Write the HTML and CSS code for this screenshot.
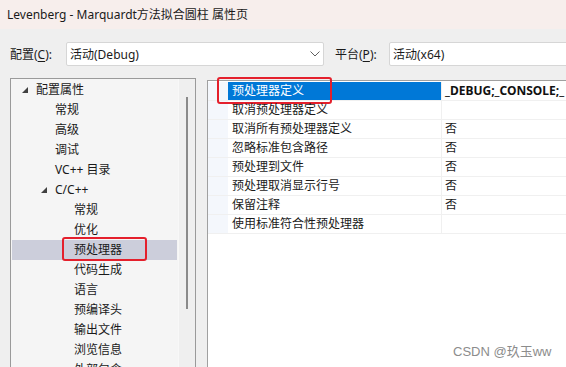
FILE: index.html
```html
<!DOCTYPE html>
<html lang="zh-CN">
<head>
    <meta charset="UTF-8">
    <title>属性页</title>
    <link rel="stylesheet" href="styles.css">
</head>
<body>
    <div class="titlebar">Levenberg - Marquardt方法拟合圆柱 属性页</div>

    <div class="config-row">
        <div class="label">配置(<u>C</u>):</div>
        <div class="combo combo-config">
            <span>活动(Debug)</span>
            <svg class="chevron" width="10" height="6" viewBox="0 0 10 6"><polyline points="0.5,0.5 5,5 9.5,0.5" fill="none" stroke="#606060" stroke-width="1"/></svg>
        </div>
        <div class="label label-platform">平台(<u>P</u>):</div>
        <div class="combo combo-platform">
            <span>活动(x64)</span>
        </div>
    </div>

    <div class="main">
        <div class="tree">
            <div class="tree-list">
                <div class="node lvl0"><svg class="twisty" width="6" height="6" viewBox="0 0 6 6"><polygon points="6,0 6,6 0,6" fill="#404040"/></svg>配置属性</div>
                <div class="node lvl1">常规</div>
                <div class="node lvl1">高级</div>
                <div class="node lvl1">调试</div>
                <div class="node lvl1">VC++ 目录</div>
                <div class="node lvl1"><svg class="twisty" width="6" height="6" viewBox="0 0 6 6"><polygon points="6,0 6,6 0,6" fill="#404040"/></svg>C/C++</div>
                <div class="node lvl2">常规</div>
                <div class="node lvl2">优化</div>
                <div class="node lvl2 selected marked">预处理器</div>
                <div class="node lvl2">代码生成</div>
                <div class="node lvl2">语言</div>
                <div class="node lvl2">预编译头</div>
                <div class="node lvl2">输出文件</div>
                <div class="node lvl2">浏览信息</div>
                <div class="node lvl2">外部包含</div>
            </div>
            <div class="scrollbar"><div class="thumb"></div></div>
        </div>

        <div class="grid">
            <div class="row selected">
                <div class="gutter"></div>
                <div class="name marked">预处理器定义</div>
                <div class="value bold">_DEBUG;_CONSOLE;_</div>
            </div>
            <div class="row"><div class="gutter"></div><div class="name">取消预处理器定义</div><div class="value"></div></div>
            <div class="row"><div class="gutter"></div><div class="name">取消所有预处理器定义</div><div class="value">否</div></div>
            <div class="row"><div class="gutter"></div><div class="name">忽略标准包含路径</div><div class="value">否</div></div>
            <div class="row"><div class="gutter"></div><div class="name">预处理到文件</div><div class="value">否</div></div>
            <div class="row"><div class="gutter"></div><div class="name">预处理取消显示行号</div><div class="value">否</div></div>
            <div class="row"><div class="gutter"></div><div class="name">保留注释</div><div class="value">否</div></div>
            <div class="row"><div class="gutter"></div><div class="name">使用标准符合性预处理器</div><div class="value"></div></div>
        </div>
    </div>

    <div class="watermark">CSDN @玖玉ww</div>
</body>
</html>
```

FILE: styles.css
```css
/* General Styles */
html, body {
    height: 367px;
}
body {
    margin: 0;
    position: relative;
    overflow: hidden;
    background-color: #EFEFEF;
    color: #1A1A1A;
    font-family: "Noto Sans", "Noto Sans CJK SC", sans-serif;
    font-size: 12px;
}
.titlebar {
    height: 29px;
    line-height: 30px;
    padding-left: 7px;
    background-color: #F7EEEC;
    color: #1A1A1A;
}

/* Configuration row */
.config-row {
    display: flex;
    align-items: center;
    height: 24px;
    margin-top: 13px;
    padding-left: 10px;
}
.label {
    width: 56px;
    flex-shrink: 0;
    white-space: nowrap;
}
.label u {
    text-decoration-thickness: 1px;
    text-underline-offset: 2px;
}
.label-platform {
    width: 54px;
    margin-left: 11px;
}
.combo {
    box-sizing: border-box;
    height: 24px;
    flex-shrink: 0;
    display: flex;
    align-items: center;
    justify-content: space-between;
    padding: 0 3px 0 3px;
    background-color: #FFFFFF;
    border: 1px solid #D6D6D6;
    border-radius: 2px;
}
.combo-config {
    width: 258px;
}
.combo-platform {
    width: 200px;
}

/* Main area */
.main {
    display: flex;
    align-items: flex-start;
    margin-top: 12px;
}
.tree {
    display: flex;
    flex-shrink: 0;
    width: 186px;
    height: 320px;
    margin-left: 10px;
    box-sizing: border-box;
    border: 1px solid #9A9A9A;
    background-color: #F5F5F5;
}
.tree-list {
    flex: 1;
    padding-top: 1px;
}
.node {
    position: relative;
    height: 20px;
    line-height: 20px;
    margin: 0 1px;
    white-space: nowrap;
}
.node.lvl0 { padding-left: 24px; }
.node.lvl1 { padding-left: 43px; }
.node.lvl2 { padding-left: 62px; }
.twisty {
    position: absolute;
    margin-left: -14px;
    margin-top: 7px;
}
.node.selected {
    background-color: #CCCEDB;
}
.node.marked::after {
    content: "";
    position: absolute;
    left: 50px;
    top: -3px;
    width: 85px;
    height: 24px;
    box-sizing: border-box;
    border: 2px solid #E4202C;
    border-radius: 3px;
}
.scrollbar {
    width: 16px;
    background-color: #EFEFEF;
    border-left: 1px solid #F8F8F8;
}
.thumb {
    width: 2px;
    height: 212px;
    margin: 18px 0 0 7px;
    background-color: #8A8A8A;
}

/* Property grid */
.grid {
    flex: 1;
    min-width: 0;
    height: 300px;
    margin-left: 11px;
    margin-top: 2px;
    padding-top: 1px;
    border-top: 1px solid #A0A0A0;
    border-left: 1px solid #A0A0A0;
    background-color: #FFFFFF;
}
.row {
    display: flex;
    height: 19px;
    box-sizing: border-box;
    border-bottom: 1px solid #F0F0F0;
    line-height: 18px;
}
.gutter {
    width: 20px;
    flex-shrink: 0;
    background-color: #F4F7FC;
}
.name {
    position: relative;
    width: 214px;
    flex-shrink: 0;
    padding-left: 4px;
    box-sizing: border-box;
    border-right: 1px solid #F0F0F0;
    white-space: nowrap;
}
.value {
    flex: 1;
    min-width: 0;
    padding-left: 3px;
    white-space: nowrap;
    overflow: hidden;
}
.value.bold {
    font-weight: bold;
    color: #111111;
}
.row.selected .name {
    background-color: #0078D7;
    color: #FFFFFF;
}
.name.marked::after {
    content: "";
    position: absolute;
    left: -11px;
    top: -5px;
    width: 115px;
    height: 27px;
    box-sizing: border-box;
    border: 2px solid #E4202C;
    border-radius: 3px;
}

.watermark {
    position: absolute;
    left: 453px;
    top: 343px;
    color: #8C8C8C;
    font-family: "Liberation Sans", "Noto Sans CJK SC", sans-serif;
    font-size: 13px;
    line-height: 18px;
}
```
